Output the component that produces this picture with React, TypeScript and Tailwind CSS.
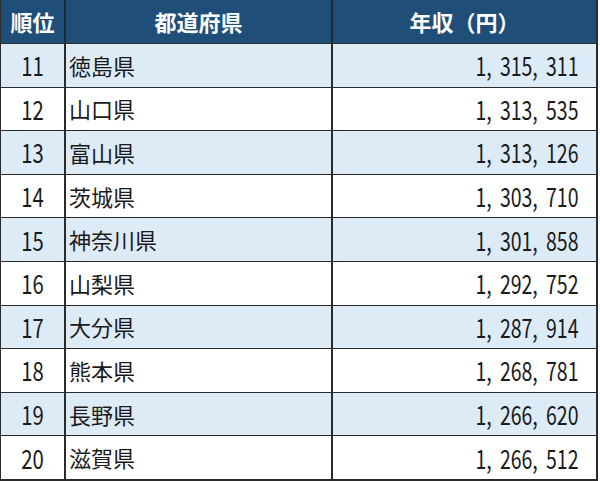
import React from "react";

type Row = { rank: number; pref: string; income: string };

const rows: Row[] = [
  { rank: 11, pref: "徳島県", income: "1,315,311" },
  { rank: 12, pref: "山口県", income: "1,313,535" },
  { rank: 13, pref: "富山県", income: "1,313,126" },
  { rank: 14, pref: "茨城県", income: "1,303,710" },
  { rank: 15, pref: "神奈川県", income: "1,301,858" },
  { rank: 16, pref: "山梨県", income: "1,292,752" },
  { rank: 17, pref: "大分県", income: "1,287,914" },
  { rank: 18, pref: "熊本県", income: "1,268,781" },
  { rank: 19, pref: "長野県", income: "1,266,620" },
  { rank: 20, pref: "滋賀県", income: "1,266,512" },
];

const font = { fontFamily: '"Noto Sans CJK JP", "Noto Sans", sans-serif' };

// digits in the source are tall and narrow, with a gap after each comma
function Num({ value }: { value: string }) {
  const parts = value.split(",");
  return (
    <span className="inline-block origin-right scale-x-[0.75] text-[26px] leading-none">
      {parts.map((p, i) => (
        <React.Fragment key={i}>
          {p}
          {i < parts.length - 1 && <span className="mr-[11px]">,</span>}
        </React.Fragment>
      ))}
    </span>
  );
}

export default function App() {
  return (
    <div className="h-[481px] w-[600px] bg-white" style={font}>
      <div className="w-[598px] border-l border-r-2 border-b-2 border-[#2b2b2b]">
        <div className="grid h-[43px] grid-cols-[65px_267px_1fr] bg-[#1f4e78] text-[22px] font-bold text-white">
          <div className="flex items-center justify-center border-r-2 border-[#1a2a3a]">順位</div>
          <div className="flex items-center justify-center border-r-2 border-[#1a2a3a]">都道府県</div>
          <div className="flex items-center justify-center">年収（円）</div>
        </div>
        {rows.map((r, i) => (
          <div
            key={r.rank}
            className={`grid h-[43.6px] grid-cols-[65px_267px_1fr] border-t-[1.5px] border-[#2b2b2b] text-[22px] text-[#1a1a1a] ${
              i % 2 === 0 ? "bg-[#ddebf7]" : "bg-white"
            }`}
          >
            <div className="flex items-center justify-center border-r-2 border-[#2b2b2b]">
              <span className="inline-block scale-x-[0.78] text-[26px] leading-none">{r.rank}</span>
            </div>
            <div className="flex items-center border-r-2 border-[#2b2b2b] pl-[3px]">{r.pref}</div>
            <div className="flex items-center justify-end pr-[18px]">
              <Num value={r.income} />
            </div>
          </div>
        ))}
      </div>
    </div>
  );
}
